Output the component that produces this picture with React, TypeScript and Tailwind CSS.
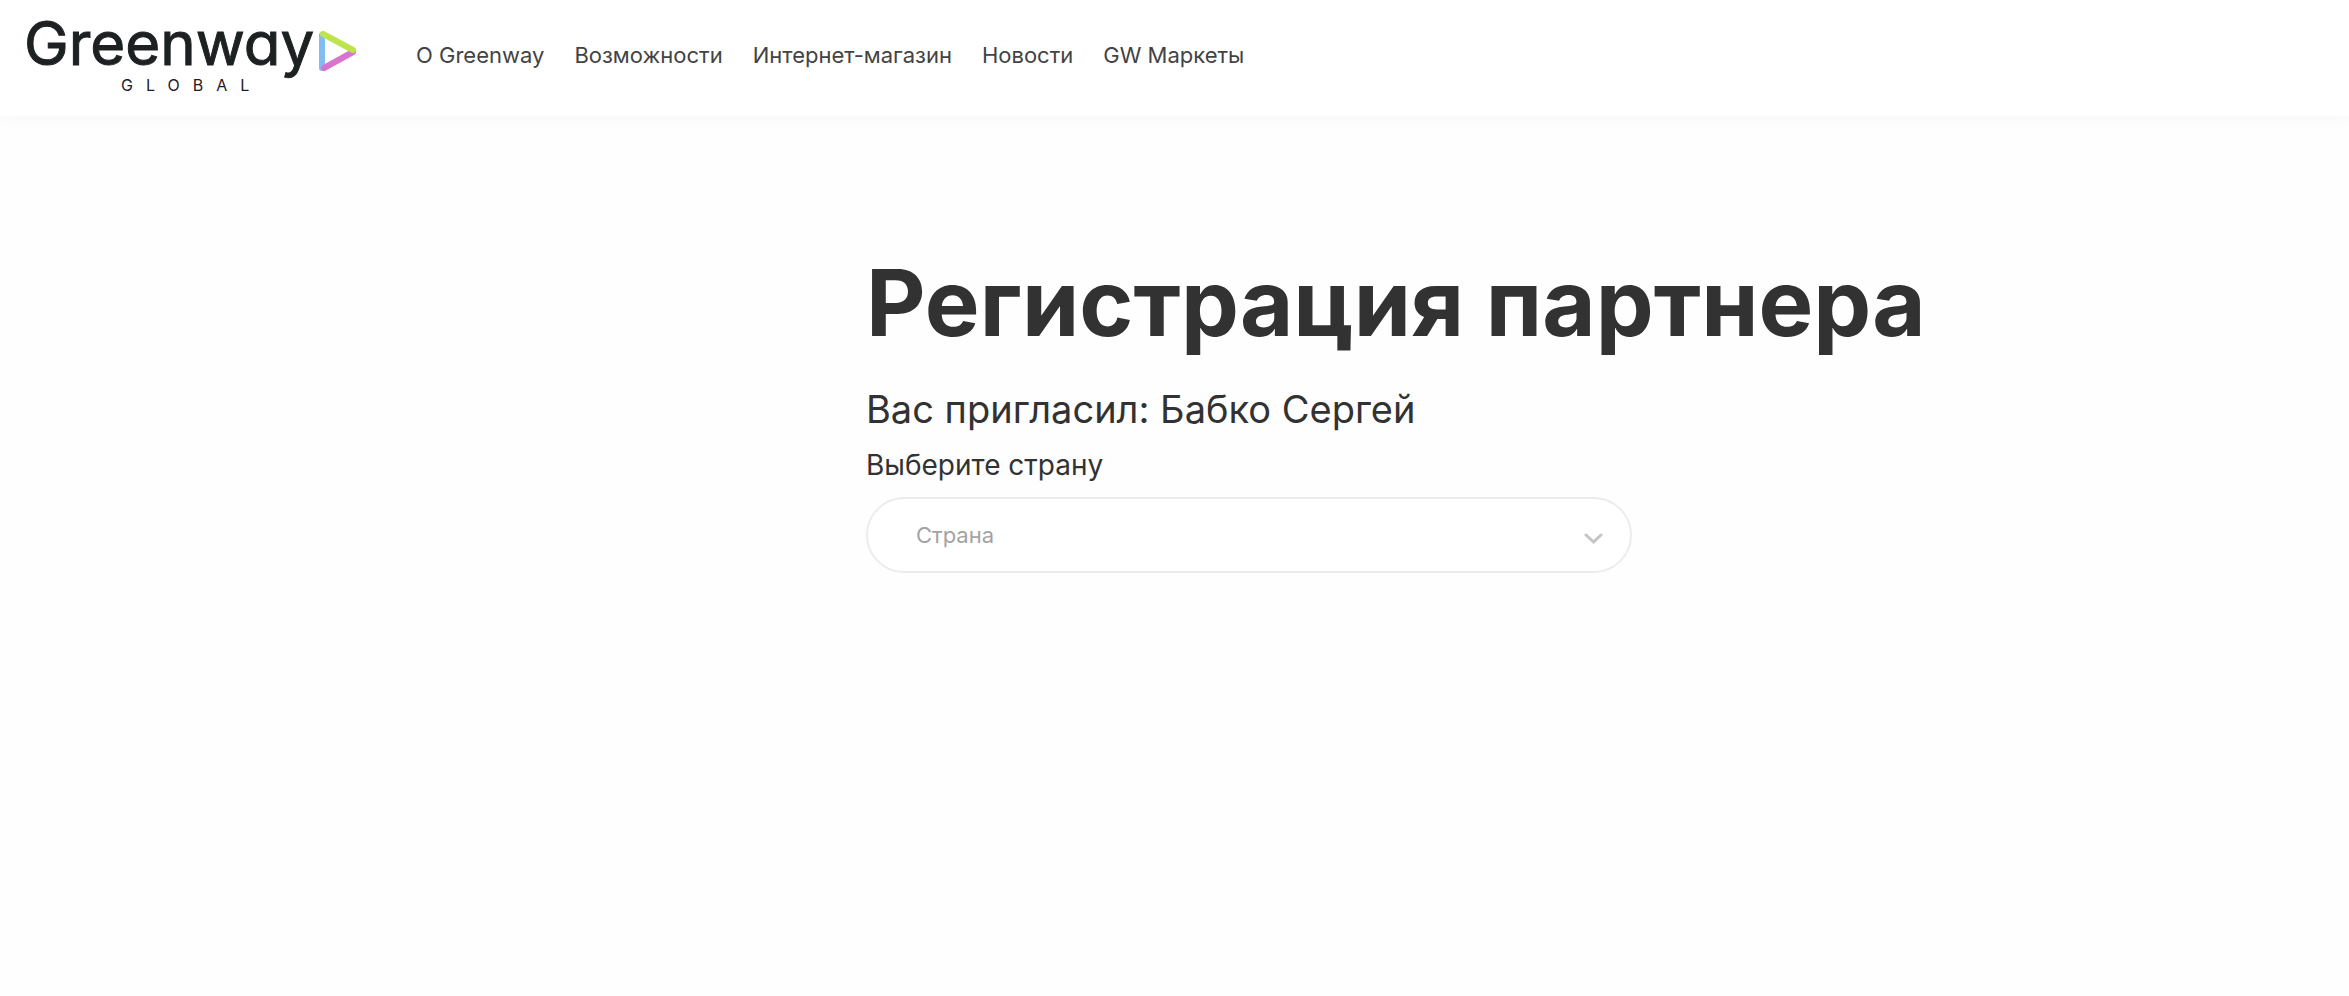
import { useState } from 'react';

const NAV_LINKS = ['О Greenway', 'Возможности', 'Интернет-магазин', 'Новости', 'GW Маркеты'];

const COUNTRIES = ['Россия', 'Беларусь', 'Казахстан', 'Украина'];

function Logo() {
  return (
    <a href="#" aria-label="Greenway Global" className="block shrink-0 text-[#1d2122]">
      <svg width="334" height="96" viewBox="0 0 334 96" fill="none">
        <text
          x="0"
          y="65"
          fill="currentColor"
          stroke="currentColor"
          strokeWidth="1"
          className="font-['Inter',sans-serif] text-[60px] font-normal [font-feature-settings:'cv11']"
        >
          Greenway
        </text>
        <text
          x="97"
          y="91"
          fill="currentColor"
          className="font-['Inter',sans-serif] text-[16px] font-normal tracking-[13px]"
        >
          GLOBAL
        </text>
        <g strokeWidth="6" strokeLinecap="round">
          <path d="M298 35V68" stroke="#82bdf2" />
          <path d="M300 68L329 52" stroke="#d873d0" />
          <path d="M299 34L329 50" stroke="#bde44c" />
        </g>
      </svg>
    </a>
  );
}

function Header() {
  return (
    <header className="flex items-start bg-white px-6 pb-5 shadow-[0_6px_14px_rgba(0,0,0,0.025)]">
      <Logo />
      <nav className="ml-[58px] flex flex-wrap gap-x-[30px] pt-10 text-[22px] leading-[30px] text-[#434343]">
        {NAV_LINKS.map((label) => (
          <a key={label} href="#">
            {label}
          </a>
        ))}
      </nav>
    </header>
  );
}

function CountrySelect() {
  const [country, setCountry] = useState('');

  return (
    <div className="relative mt-[14px] max-w-[766px]">
      <select
        id="country"
        value={country}
        onChange={(e) => setCountry(e.target.value)}
        className="block h-[76px] w-full appearance-none rounded-full border-2 border-[#ececec] bg-white pl-12 pr-16 text-[22px] text-[#a3a3a3] outline-none"
      >
        <option value="" disabled>
          Страна
        </option>
        {COUNTRIES.map((name) => (
          <option key={name} value={name}>
            {name}
          </option>
        ))}
      </select>
      <svg
        className="pointer-events-none absolute right-7 top-9"
        width="20"
        height="12"
        viewBox="0 0 20 12"
        fill="none"
      >
        <path d="M2 2L9.500 9L17 2" stroke="#c4c4c4" strokeWidth="3" strokeLinecap="round" />
      </svg>
    </div>
  );
}

export default function App() {
  return (
    <div className="min-h-screen bg-[#fefefe] font-['Inter',sans-serif] text-[#323232]">
      <Header />
      <main className="grid grid-cols-[866fr_1483fr] pt-[131px]">
        <div className="col-start-2">
          <h1 className="text-[92px] leading-[112px] font-bold">Регистрация партнера</h1>
          <p className="mt-[26px] text-[38px] leading-[48px]">Вас пригласил: Бабко Сергей</p>
          <label htmlFor="country" className="mt-[14px] block text-[28px] leading-9">
            Выберите страну
          </label>
          <CountrySelect />
        </div>
      </main>
    </div>
  );
}
